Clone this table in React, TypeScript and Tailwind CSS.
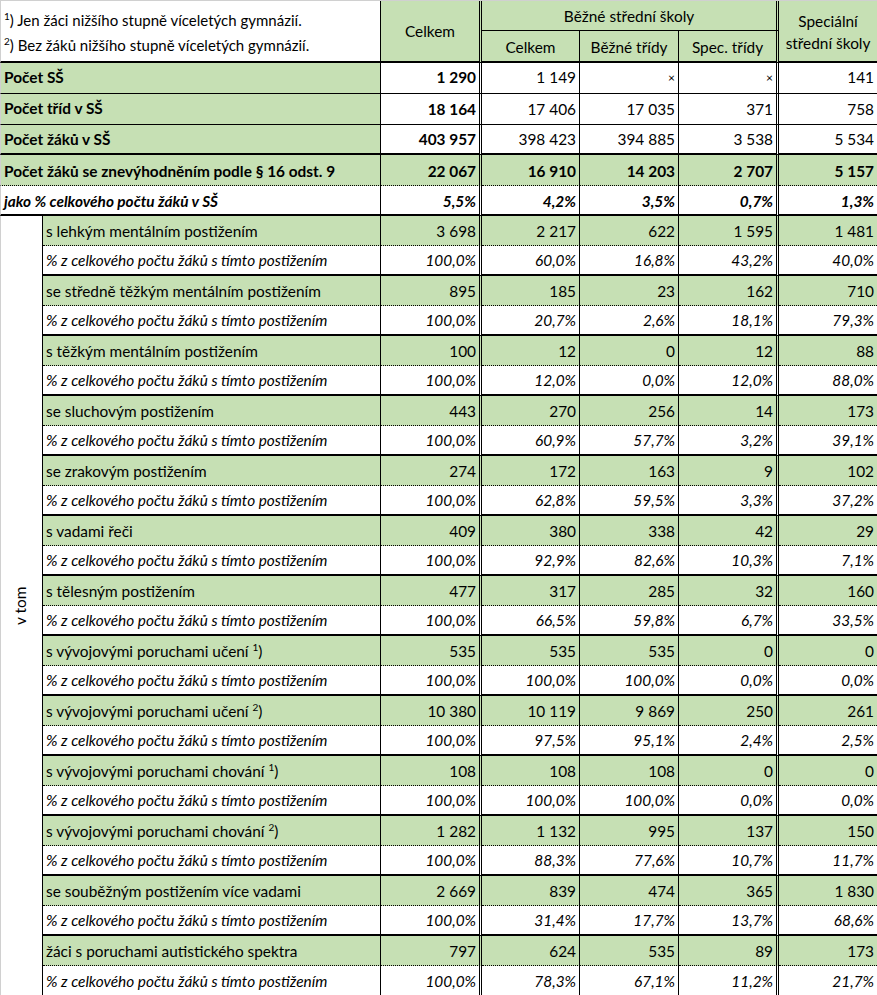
import React from 'react';

type Cat = {
  label: React.ReactNode;
  counts: string[];
  pcts: string[];
};

const Sup = ({ n }: { n: string }) => <sup className="text-[10px] -top-[6px]">{n}</sup>;

const categories: Cat[] = [
  { label: 's lehkým mentálním postižením', counts: ['3 698', '2 217', '622', '1 595', '1 481'], pcts: ['100,0%', '60,0%', '16,8%', '43,2%', '40,0%'] },
  { label: 'se středně těžkým mentálním postižením', counts: ['895', '185', '23', '162', '710'], pcts: ['100,0%', '20,7%', '2,6%', '18,1%', '79,3%'] },
  { label: 's těžkým mentálním postižením', counts: ['100', '12', '0', '12', '88'], pcts: ['100,0%', '12,0%', '0,0%', '12,0%', '88,0%'] },
  { label: 'se sluchovým postižením', counts: ['443', '270', '256', '14', '173'], pcts: ['100,0%', '60,9%', '57,7%', '3,2%', '39,1%'] },
  { label: 'se zrakovým postižením', counts: ['274', '172', '163', '9', '102'], pcts: ['100,0%', '62,8%', '59,5%', '3,3%', '37,2%'] },
  { label: 's vadami řeči', counts: ['409', '380', '338', '42', '29'], pcts: ['100,0%', '92,9%', '82,6%', '10,3%', '7,1%'] },
  { label: 's tělesným postižením', counts: ['477', '317', '285', '32', '160'], pcts: ['100,0%', '66,5%', '59,8%', '6,7%', '33,5%'] },
  { label: <>s vývojovými poruchami učení <Sup n="1" />)</>, counts: ['535', '535', '535', '0', '0'], pcts: ['100,0%', '100,0%', '100,0%', '0,0%', '0,0%'] },
  { label: <>s vývojovými poruchami učení <Sup n="2" />)</>, counts: ['10 380', '10 119', '9 869', '250', '261'], pcts: ['100,0%', '97,5%', '95,1%', '2,4%', '2,5%'] },
  { label: <>s vývojovými poruchami chování <Sup n="1" />)</>, counts: ['108', '108', '108', '0', '0'], pcts: ['100,0%', '100,0%', '100,0%', '0,0%', '0,0%'] },
  { label: <>s vývojovými poruchami chování <Sup n="2" />)</>, counts: ['1 282', '1 132', '995', '137', '150'], pcts: ['100,0%', '88,3%', '77,6%', '10,7%', '11,7%'] },
  { label: 'se souběžným postižením více vadami', counts: ['2 669', '839', '474', '365', '1 830'], pcts: ['100,0%', '31,4%', '17,7%', '13,7%', '68,6%'] },
  { label: 'žáci s poruchami autistického spektra', counts: ['797', '624', '535', '89', '173'], pcts: ['100,0%', '78,3%', '67,1%', '11,2%', '21,7%'] },
];

// right borders of the 5 data columns: double after Celkem and after Spec. třídy
const colRight = [
  '[border-right:3px_double_black]',
  'border-r border-r-black',
  'border-r border-r-black',
  '[border-right:3px_double_black]',
  '',
];

const thin = 'border-b border-b-black';
const thick = 'border-b-2 border-b-black';
const dotted = '[border-bottom:1px_dotted_black]';

const green = 'bg-[#c6e0b4]';

function DataCells({ values, bottom, bg, extra }: { values: string[]; bottom: string; bg: (i: number) => string; extra: (i: number) => string }) {
  return (
    <>
      {values.map((v, i) => (
        <td key={i} className={`px-[3px] pt-[2px] text-right whitespace-nowrap ${colRight[i]} ${bottom} ${bg(i)} ${extra(i)}`}>
          {v}
        </td>
      ))}
    </>
  );
}

export default function App() {
  return (
    <div className="w-[877px] bg-white text-black border-t border-t-[#d0d0d0] font-['Lato','Liberation_Sans',sans-serif] text-[15.4px] leading-none">
      <table className="w-[877px] table-fixed border-separate border-spacing-0">
        <colgroup>
          <col className="w-[43px]" />
          <col className="w-[338px]" />
          <col className="w-[101px]" />
          <col className="w-[98px]" />
          <col className="w-[99px]" />
          <col className="w-[100px]" />
          <col className="w-[98px]" />
        </colgroup>
        <thead>
          <tr className="h-[30px]">
            <td colSpan={2} rowSpan={2} className={`px-[3px] align-middle border-r border-r-black border-l border-l-[#d0d0d0] ${thick}`}>
              <div className="flex flex-col gap-[10px] text-[15px] pt-[4px]">
                <span><Sup n="1" />) Jen žáci nižšího stupně víceletých gymnázií.</span>
                <span><Sup n="2" />) Bez žáků nižšího stupně víceletých gymnázií.</span>
              </div>
            </td>
            <td rowSpan={2} className={`text-center pt-[2px] ${green} ${colRight[0]} ${thick}`}>Celkem</td>
            <td colSpan={3} className={`text-center pt-[3px] ${green} ${colRight[3]} ${thin}`}>Běžné střední školy</td>
            <td rowSpan={2} className={`text-center ${green} ${thick}`}>
              <div className="flex flex-col gap-[7px] pt-[3px]">
                <span>Speciální</span>
                <span>střední školy</span>
              </div>
            </td>
          </tr>
          <tr className="h-[32px]">
            <td className={`text-center pt-[3px] ${green} ${colRight[1]} ${thick}`}>Celkem</td>
            <td className={`text-center pt-[3px] ${green} ${colRight[2]} ${thick}`}>Běžné třídy</td>
            <td className={`text-center pt-[3px] ${green} ${colRight[3]} ${thick}`}>Spec. třídy</td>
          </tr>
        </thead>
        <tbody>
          <tr className="h-[31px]">
            <td colSpan={2} className={`px-[3px] font-bold ${green} border-r border-r-black border-l border-l-[#d0d0d0] ${thin}`}>Počet SŠ</td>
            <td className={`px-[3px] text-right font-bold ${colRight[0]} ${thin}`}>1 290</td>
            <td className={`px-[3px] text-right ${colRight[1]} ${thin}`}>1 149</td>
            <td className={`px-[3px] text-right text-[12px] ${colRight[2]} ${thin}`}>×</td>
            <td className={`px-[3px] text-right text-[12px] ${colRight[3]} ${thin}`}>×</td>
            <td className={`px-[3px] text-right ${thin}`}>141</td>
          </tr>
          <tr className="h-[31px]">
            <td colSpan={2} className={`px-[3px] font-bold ${green} border-r border-r-black border-l border-l-[#d0d0d0] ${thin}`}>Počet tříd v SŠ</td>
            <DataCells values={['18 164', '17 406', '17 035', '371', '758']} bottom={thin} bg={() => ''} extra={(i) => (i === 0 ? 'font-bold' : '')} />
          </tr>
          <tr className="h-[30px]">
            <td colSpan={2} className={`px-[3px] pt-[2px] font-bold ${green} border-r border-r-black border-l border-l-[#d0d0d0] ${thick}`}>Počet žáků v SŠ</td>
            <DataCells values={['403 957', '398 423', '394 885', '3 538', '5 534']} bottom={thick} bg={() => ''} extra={(i) => (i === 0 ? 'font-bold' : '')} />
          </tr>
          <tr className="h-[31px]">
            <td colSpan={2} className={`px-[3px] pt-[4px] font-bold ${green} border-r border-r-black border-l border-l-[#d0d0d0] ${dotted}`}>Počet žáků se znevýhodněním podle § 16 odst. 9</td>
            <DataCells values={['22 067', '16 910', '14 203', '2 707', '5 157']} bottom={dotted} bg={() => green} extra={() => 'font-bold pt-[4px]'} />
          </tr>
          <tr className="h-[30px]">
            <td colSpan={2} className={`px-[3px] pt-[3px] font-bold italic border-r border-r-black border-l border-l-[#d0d0d0] ${thick}`}>jako % celkového počtu žáků v SŠ</td>
            <DataCells values={['5,5%', '4,2%', '3,5%', '0,7%', '1,3%']} bottom={thick} bg={() => ''} extra={() => 'font-bold italic pt-[3px]'} />
          </tr>
          {categories.map((c, idx) => (
            <React.Fragment key={idx}>
              <tr className="h-[30px]">
                {idx === 0 && (
                  <td rowSpan={26} className="border-r border-r-black border-l border-l-[#d0d0d0] align-middle">
                    <div className="flex items-center justify-center">
                      <span className="-rotate-90 whitespace-nowrap">v tom</span>
                    </div>
                  </td>
                )}
                <td className={`px-[3px] pt-[3px] whitespace-nowrap ${green} border-r border-r-black ${dotted}`}>{c.label}</td>
                <DataCells values={c.counts} bottom={dotted} bg={() => green} extra={() => 'pt-[3px]'} />
              </tr>
              <tr className="h-[30px]">
                <td className={`px-[3px] pt-[2px] italic border-r border-r-black ${idx === categories.length - 1 ? '' : thick}`}>
                  % z celkového počtu žáků s tímto postižením
                </td>
                <DataCells values={c.pcts} bottom={idx === categories.length - 1 ? '' : thick} bg={() => ''} extra={() => 'italic'} />
              </tr>
            </React.Fragment>
          ))}
        </tbody>
      </table>
    </div>
  );
}
